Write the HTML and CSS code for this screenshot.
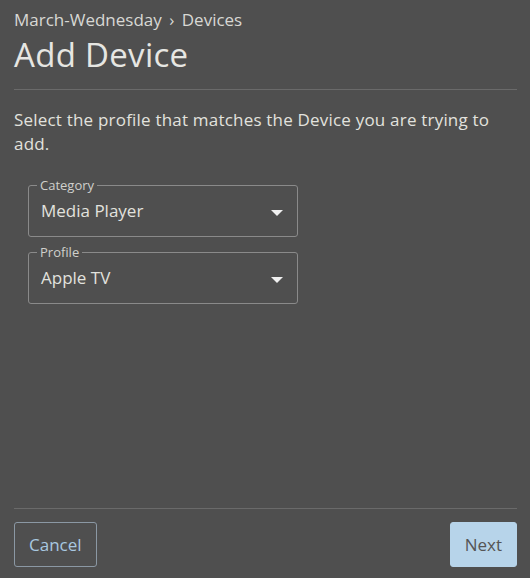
FILE: index.html
```html
<!DOCTYPE html>
<html lang="en">
<head>
    <meta charset="UTF-8">
    <meta name="viewport" content="width=device-width, initial-scale=1.0">
    <title>Add Device</title>
    <link rel="stylesheet" href="styles.css">
</head>
<body>
    <div class="dialog">
        <div class="header">
            <div class="crumbs">March-Wednesday <span class="sep">›</span> Devices</div>
            <h1>Add Device</h1>
        </div>

        <div class="content">
            <p class="intro">Select the profile that matches the Device you are trying to add.</p>

            <fieldset class="select">
                <legend>Category</legend>
                <span class="value">Media Player</span>
                <span class="caret"></span>
            </fieldset>

            <fieldset class="select">
                <legend>Profile</legend>
                <span class="value">Apple TV</span>
                <span class="caret"></span>
            </fieldset>
        </div>

        <div class="footer">
            <button class="btn btn-outline">Cancel</button>
            <button class="btn btn-primary">Next</button>
        </div>
    </div>
</body>
</html>
```

FILE: styles.css
```css
html, body {
    margin: 0;
    height: 100%;
    background: #4f4f4f;
}
body {
    font-family: "Open Sans", "Noto Sans", sans-serif;
    color: #e2e2de;
}
.dialog {
    display: flex;
    flex-direction: column;
    height: 578px;
    padding: 0 13px 0 14px;
    box-sizing: border-box;
}
.header {
    padding-top: 9px;
    border-bottom: 1px solid #6a6a6a;
    padding-bottom: 14px;
}
.crumbs {
    font-size: 17px;
    line-height: 22px;
    color: #d8d8d4;
}
.crumbs .sep {
    margin: 0 3px;
}
h1 {
    margin: 4px 0 0;
    font-size: 33px;
    font-weight: 400;
    line-height: 40px;
    letter-spacing: 0.3px;
    color: #e6e6e2;
}
.content {
    flex: 1;
}
.intro {
    max-width: 495px;
    margin: 18px 0 22px;
    font-size: 17px;
    line-height: 24px;
    letter-spacing: 0.2px;
}
.select {
    position: relative;
    width: 270px;
    height: 59px;
    box-sizing: border-box;
    margin: 0 0 8px 14px;
    padding: 0 12px;
    border: 1px solid #8a8a8a;
    border-radius: 3px;
}
.select legend {
    padding: 0 3px;
    margin-left: -4px;
    font-size: 13px;
    line-height: 14px;
    color: #d0d0cc;
}
.select .value {
    display: block;
    font-size: 17px;
    line-height: 22px;
    margin-top: 8px;
}
.caret {
    position: absolute;
    right: 14px;
    top: 18px;
    width: 0;
    height: 0;
    border-left: 6px solid transparent;
    border-right: 6px solid transparent;
    border-top: 6px solid #f0f0f0;
}
.footer {
    display: flex;
    justify-content: space-between;
    border-top: 1px solid #6a6a6a;
    padding: 13px 0 11px;
}
.btn {
    height: 45px;
    padding: 0 14px;
    font-family: inherit;
    font-size: 17px;
    border-radius: 3px;
}
.btn-outline {
    background: transparent;
    border: 1px solid #8b98a4;
    color: #a9c8e0;
}
.btn-primary {
    background: #b7d4ea;
    border: 1px solid #b7d4ea;
    color: #555;
}
```
